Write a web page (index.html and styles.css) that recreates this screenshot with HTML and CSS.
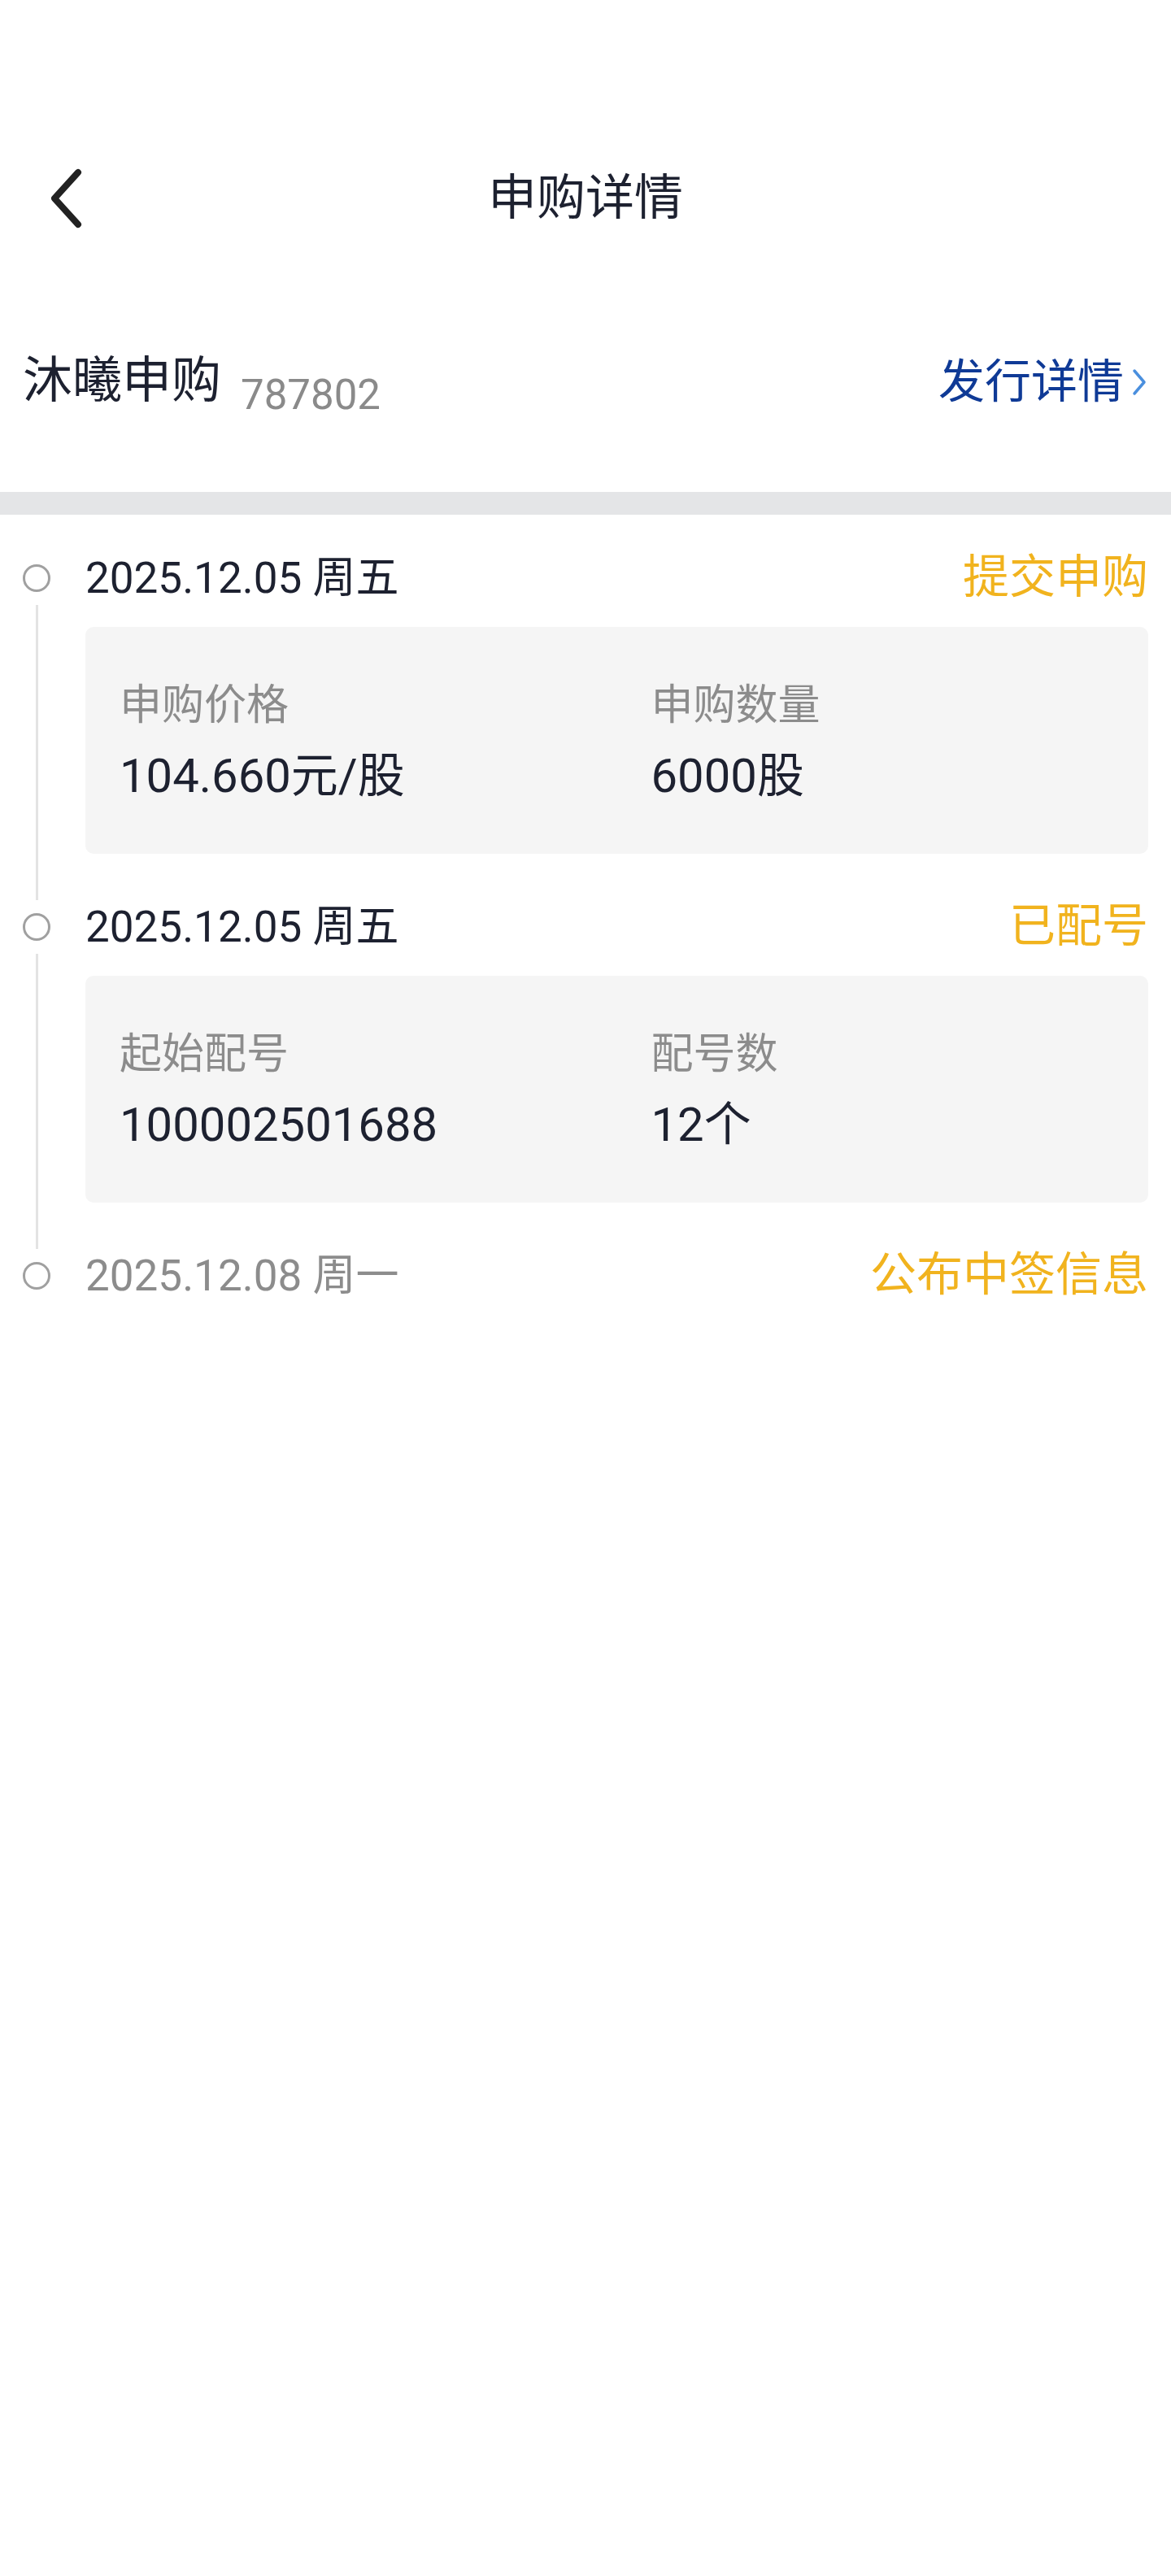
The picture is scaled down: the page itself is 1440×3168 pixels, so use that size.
FILE: index.html
```html
<!DOCTYPE html>
<html lang="zh-CN">
<head>
    <meta charset="UTF-8">
    <meta name="viewport" content="width=device-width, initial-scale=1.0">
    <title>申购详情</title>
    <link rel="stylesheet" href="styles.css">
</head>
<body>
    <header class="nav">
        <a class="back" href="#">
            <svg width="48" height="80" viewBox="0 0 48 80">
                <polyline points="40,8 11,40 40,72" fill="none" stroke="#222" stroke-width="8" stroke-linecap="round" stroke-linejoin="round"/>
            </svg>
        </a>
        <h1 class="title">申购详情</h1>
        <span></span>
    </header>

    <section class="info">
        <div class="name">沐曦申购<span class="code">787802</span></div>
        <a class="more" href="#">发行详情<svg width="22" height="34" viewBox="0 0 22 34"><polyline points="5,3 17,17 5,31" fill="none" stroke="#4a8fde" stroke-width="3.5" stroke-linecap="round" stroke-linejoin="round"/></svg></a>
    </section>

    <div class="band"></div>

    <section class="timeline">
        <div class="step">
            <div class="rail"><span class="dot"></span><span class="line"></span></div>
            <div class="step-body">
                <div class="step-head">
                    <span class="date">2025.12.05 周五</span>
                    <span class="status">提交申购</span>
                </div>
                <div class="card">
                    <div class="field">
                        <div class="label">申购价格</div>
                        <div class="value">104.660元/股</div>
                    </div>
                    <div class="field">
                        <div class="label">申购数量</div>
                        <div class="value">6000股</div>
                    </div>
                </div>
            </div>
        </div>

        <div class="step">
            <div class="rail"><span class="dot"></span><span class="line"></span></div>
            <div class="step-body">
                <div class="step-head">
                    <span class="date">2025.12.05 周五</span>
                    <span class="status">已配号</span>
                </div>
                <div class="card">
                    <div class="field">
                        <div class="label">起始配号</div>
                        <div class="value">100002501688</div>
                    </div>
                    <div class="field">
                        <div class="label">配号数</div>
                        <div class="value">12个</div>
                    </div>
                </div>
            </div>
        </div>

        <div class="step last">
            <div class="rail"><span class="dot"></span></div>
            <div class="step-body">
                <div class="step-head">
                    <span class="date muted">2025.12.08 周一</span>
                    <span class="status">公布中签信息</span>
                </div>
            </div>
        </div>
    </section>
</body>
</html>
```

FILE: styles.css
```css
body {
    font-family: Roboto, "Noto Sans CJK SC", sans-serif;
    background-color: #fff;
    color: #1d2130;
    margin: 0;
    padding: 0;
}

a {
    text-decoration: none;
}

.nav {
    display: grid;
    grid-template-columns: 1fr auto 1fr;
    align-items: center;
    height: 120px;
    padding-top: 184px;
}

.back {
    display: flex;
    padding-left: 56px;
}

.title {
    margin: 0;
    font-size: 60px;
    font-weight: normal;
    line-height: 120px;
    color: #1d2130;
}

.info {
    display: flex;
    justify-content: space-between;
    align-items: baseline;
    padding: 124px 28px 94px;
}

.name {
    font-size: 61px;
    line-height: 80px;
    color: #1d2130;
}

.code {
    font-size: 51px;
    line-height: 1;
    color: #8a8a8a;
    margin-left: 24px;
    vertical-align: -14px;
}

.more {
    display: flex;
    align-items: center;
    font-size: 57px;
    line-height: 80px;
    color: #0f3a96;
}

.more svg {
    margin-left: 8px;
}

.band {
    height: 28px;
    background-color: #e4e5e7;
}

.timeline {
    padding: 32px 28px 0;
}

.step {
    display: flex;
}

.rail {
    flex: 0 0 34px;
    margin-right: 43px;
    display: flex;
    flex-direction: column;
    align-items: center;
}

.dot {
    flex-shrink: 0;
    width: 34px;
    height: 34px;
    margin-top: 29px;
    box-sizing: border-box;
    border: 3px solid #a0a0a0;
    border-radius: 50%;
}

.line {
    flex: 1;
    width: 3px;
    margin: 16px 0 -13px;
    background-color: #e3e3e3;
}

.step-body {
    flex: 1;
}

.step-head {
    display: flex;
    justify-content: space-between;
    align-items: baseline;
    height: 90px;
}

.date {
    font-size: 53px;
    line-height: 90px;
}

.date.muted {
    color: #8c8c8c;
}

.status {
    font-size: 57px;
    line-height: 90px;
    color: #f1b31e;
}

.card {
    display: grid;
    grid-template-columns: 1fr 1fr;
    margin: 16px 0 44px;
    padding: 61px 0 56px;
    background-color: #f5f5f5;
    border-radius: 10px;
}

.field {
    padding-left: 42px;
}

.label {
    font-size: 52px;
    line-height: 72px;
    color: #8c8c8c;
}

.value {
    margin-top: 10px;
    font-size: 58px;
    line-height: 80px;
    color: #1d2130;
}
```
